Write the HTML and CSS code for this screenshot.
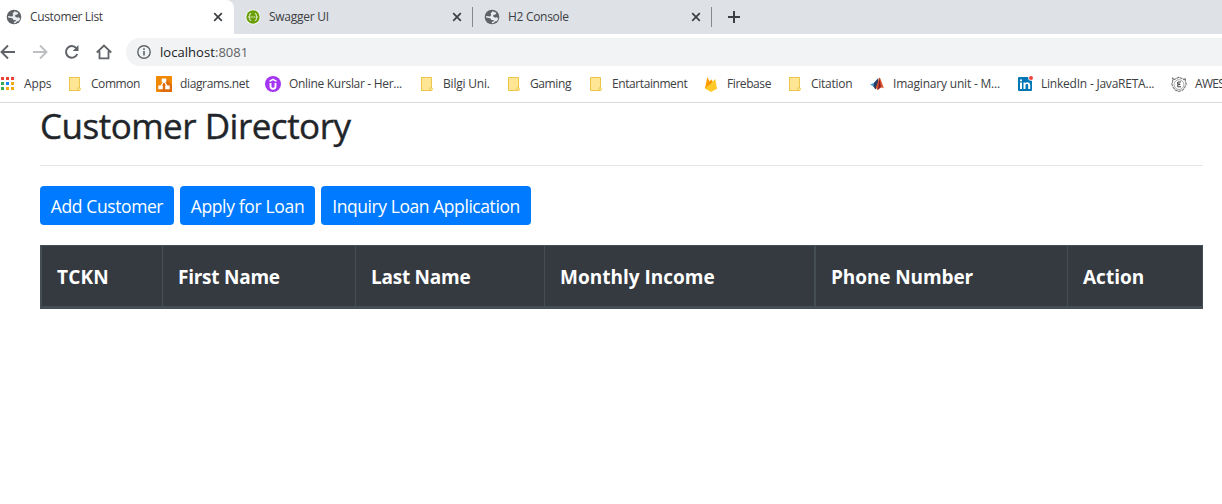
FILE: index.html
```html
<!DOCTYPE html>
<html lang="en">
<head>
<meta charset="utf-8">
<title>Customer List</title>
<link rel="stylesheet" href="styles.css">
</head>
<body>
<svg class="defs" width="0" height="0">
  <symbol id="globe" viewBox="0 0 16 16"><circle cx="8" cy="8" r="7.3" fill="#5f6368"/><path d="M8.600 2.300l3.600 1.500-.4 1.500-2.300.7-.7 1.500h3.400l2 2-1.200 2.400-2.200.6-1 1.500-2 .2.300-1.800H9.500l.3-1.300-2.300-.2-1.200-1.600L2 8.600l.2-1.500 4 .5 1-1.500-.6-1.600z" fill="#e9ebee"/><path d="M9.500 6.300h2.700l1 1.700-1.500.8-1.900-.9z" fill="#5f6368"/></symbol>
  <symbol id="close" viewBox="0 0 10 10"><path d="M1.2 1.2l7.6 7.6M8.8 1.2L1.2 8.8" stroke="#3c4043" stroke-width="1.7"/></symbol>
  <symbol id="folder" viewBox="0 0 14 16"><path d="M2.500 1.500h10v10.300c1.200.2 1.200 2.700 0 2.700h-10z" fill="#ffe694" stroke="#ebc64b"/><path d="M12.500 11.300c-2.200-.2-2.200 3 0 3.200" fill="none" stroke="#ebc64b"/></symbol>
</svg>
<header class="browser">
  <div class="tabs">
    <div class="tab tab-active"><svg class="fav"><use href="#globe"/></svg><span class="title t-list">Customer List</span><svg class="x"><use href="#close"/></svg></div>
    <div class="tab"><svg class="fav" viewBox="0 0 16 16"><circle cx="8" cy="8" r="7.500" fill="#fff"/><circle cx="8" cy="8" r="6.700" fill="#6a9f08"/><path d="M6.200 4.600c-1.700 0-1.500.6-1.500 1.800C4.700 7.500 4.400 8 3.500 8c.9 0 1.200.5 1.200 1.600 0 1.200-.2 1.800 1.500 1.800M9.800 4.600c1.700 0 1.500.6 1.500 1.800 0 1.100.3 1.600 1.200 1.600-.9 0-1.200.5-1.200 1.600 0 1.200.2 1.800-1.500 1.800" fill="none" stroke="#fff"/><path d="M5.500 8h5" stroke="#fff" stroke-width="1.200" stroke-dasharray="1.200 .6"/></svg><span class="title t-swag">Swagger UI</span><svg class="x"><use href="#close"/></svg></div>
    <div class="tab"><svg class="fav"><use href="#globe"/></svg><span class="title t-h2">H2 Console</span><svg class="x"><use href="#close"/></svg></div>
    <svg class="plus" viewBox="0 0 12 12"><path d="M6 0v12M0 6h12" stroke="#3c4043" stroke-width="2"/></svg>
  </div>
  <div class="toolbar">
    <svg class="nav" viewBox="0 0 16 16"><path d="M15 8H2M8 1.500L1.500 8 8 14.500" fill="none" stroke="#5f6368" stroke-width="1.900"/></svg>
    <svg class="nav" viewBox="0 0 16 16"><path d="M1 8h13M8 1.500L14.500 8 8 14.500" fill="none" stroke="#bdbfc2" stroke-width="1.900"/></svg>
    <svg class="nav" viewBox="0 0 16 16"><path d="M13.200 10A5.800 5.800 0 1 1 12.300 4.200" fill="none" stroke="#5f6368" stroke-width="2"/><path d="M14.500 1v6H8.700z" fill="#5f6368"/></svg>
    <svg class="nav" viewBox="0 0 16 16"><path d="M.8 8.500L8 1.500l7.200 7M3.500 7v7.300h9V7" fill="none" stroke="#5f6368" stroke-width="1.800"/></svg>
    <div class="omnibox"><svg class="info" viewBox="0 0 14 14"><circle cx="7" cy="7" r="6.200" fill="none" stroke="#5f6368" stroke-width="1.400"/><path d="M7 6v4.500M7 3.300v1.600" stroke="#5f6368" stroke-width="1.600"/></svg><span class="url">localhost<span class="port">:8081</span></span></div>
  </div>
  <nav class="bookmarks">
    <a class="bm"><svg class="ic" viewBox="0 0 16 16"><path d="M1 1h3v3H1zM6 1h3v3H6zM11 1h3v3h-3z" fill="#ea4335"/><path d="M1 6h3v3H1zM1 11h3v3H1z" fill="#34a853"/><path d="M6 6h3v3H6z" fill="#1a82f7"/><path d="M11 6h3v3h-3zM6 11h3v3H6zM11 11h3v3h-3z" fill="#f5ac14"/></svg><span class="b-apps">Apps</span></a>
    <a class="bm"><svg class="ic folder"><use href="#folder"/></svg><span class="b-common">Common</span></a>
    <a class="bm"><svg class="ic" viewBox="0 0 16 16"><rect width="16" height="16" rx="1" fill="#f08705"/><path d="M10 3l6 6v7H6l-4-3z" fill="#df6c0c"/><path d="M8 5L4.500 11M8 5l3.500 6" stroke="#fff" stroke-width="1.300"/><path d="M5.700 2.500h4.600v3.700H5.700zM2.300 9.500h4.500v3.800H2.300zM9.200 9.500h4.500v3.800H9.200z" fill="#fff"/></svg><span class="b-diag">diagrams.net</span></a>
    <a class="bm"><svg class="ic" viewBox="0 0 16 16"><circle cx="8" cy="8" r="8" fill="#a435f0"/><path d="M5.500 7v3.200c0 3.300 5 3.300 5 0V7" fill="none" stroke="#fff" stroke-width="1.900"/><path d="M4.500 5.300L8 3.300l3.500 2" fill="none" stroke="#fff" stroke-width="1.500"/></svg><span class="b-online">Online Kurslar - Her...</span></a>
    <a class="bm"><svg class="ic folder"><use href="#folder"/></svg><span class="b-bilgi">Bilgi Uni.</span></a>
    <a class="bm"><svg class="ic folder"><use href="#folder"/></svg><span class="b-gaming">Gaming</span></a>
    <a class="bm"><svg class="ic folder"><use href="#folder"/></svg><span class="b-ent">Entartainment</span></a>
    <a class="bm"><svg class="ic" viewBox="0 0 16 16"><path d="M2 12.500L4.200 1l2.500 4.500 1.500-2.300L14 12.500z" fill="#ffa000"/><path d="M2 12.500l6-7.800 1.700 3z" fill="#f57c00"/><path d="M2 12.500L12.300 3 14 12.800 8 16z" fill="#ffca28"/></svg><span class="b-fire">Firebase</span></a>
    <a class="bm"><svg class="ic folder"><use href="#folder"/></svg><span class="b-cit">Citation</span></a>
    <a class="bm"><svg class="ic" viewBox="0 0 16 16"><path d="M1 8.500l4-1.700 4-4.500L6.800 11l-2-.2z" fill="#4ba0d8"/><path d="M5 7l4.500-5-1 9-2 2.500-2-2.700z" fill="#293d63"/><path d="M10.500 1.500C12 3 13.500 9 15 12.500c-2-2-3.500-1-6.500 1.500L6.800 11C8.500 9 9.300 3.500 10.500 1.500z" fill="#d9532c"/><path d="M10.500 2l1.300 9-3.300 3c1.400-3 1-8 2-12z" fill="#82212b"/></svg><span class="b-imag">Imaginary unit - M...</span></a>
    <a class="bm"><svg class="ic" viewBox="0 0 16 16"><rect x="1" y="1" width="14" height="14" rx="1" fill="#0077b5"/><path d="M3 6.500h2V13H3zM3 3.500h2v1.700H3zM6.500 6.500h1.900v.8c1.200-1.700 4.800-1.200 4.800 1.700v4h-2V9.500c0-2-2.700-1.800-2.700 0V13h-2z" fill="#fff"/><circle cx="14" cy="2" r="2.800" fill="#fff"/><circle cx="14" cy="2" r="2" fill="#ee4440"/></svg><span class="b-link">LinkedIn - JavaRETA...</span></a>
    <a class="bm"><svg class="ic" viewBox="0 0 16 16"><path d="M3 3.500L1.500 2.200l.2 3.300L.8 8l1.500 3.500 2 2.500L8 15.400l3.700-1.400 2-2.500L15.200 8l-.9-2.500.2-3.300L13 3.500 8 1.200z" fill="none" stroke="#777" stroke-width="1.100" stroke-dasharray="3 .6"/><circle cx="8" cy="8.600" r="4.900" fill="none" stroke="#888" stroke-width=".7"/><path d="M10 6H6.700v2H9v.6H6.700v2.200H10" fill="none" stroke="#444"/></svg><span class="b-awes">AWES</span></a>
  </nav>
</header>
<main class="page">
  <h2 class="heading">Customer Directory</h2>
  <hr class="rule">
  <div class="actions">
    <button class="btn btn-add">Add Customer</button>
    <button class="btn btn-apply">Apply for Loan</button>
    <button class="btn btn-inquiry">Inquiry Loan Application</button>
  </div>
  <div class="table" role="row">
    <div class="th c-tckn">TCKN</div><div class="th c-first">First Name</div><div class="th c-last">Last Name</div><div class="th th-wide c-income">Monthly Income</div><div class="th c-phone">Phone Number</div><div class="th c-action">Action</div>
  </div>
</main>
</body>
</html>
```
FILE: styles.css
```css
* { box-sizing: border-box; }
body { margin: 0; width: 1222px; height: 504px; overflow: hidden; background: #fff; font-family: "Open Sans", "Noto Sans", sans-serif; }
svg { display: block; flex: none; }
.defs { position: absolute; }
.browser { height: 103px; border-bottom: 1px solid #d9dadc; font-size: 12px; color: #3c4043; }
.tabs { height: 34px; display: flex; background: #dee1e6; }
.tab { height: 34px; display: flex; align-items: center; width: 239px; padding-left: 11px; position: relative; }
.tab-active { width: 234px; padding-left: 6px; background: #fff; border-radius: 0 8px 0 0; }
.tab:not(.tab-active)::after { content: ""; position: absolute; right: 0; top: 7px; width: 1px; height: 20px; background: #85888c; }
.fav { width: 16px; height: 16px; margin-right: 8px; }
.title { flex: 1; white-space: nowrap; line-height: 16px; }
.t-list { letter-spacing: -.35px; }
.t-swag { letter-spacing: -.27px; }
.t-h2 { letter-spacing: -.3px; }
.x { width: 10px; height: 10px; margin-right: 11px; }
.plus { width: 12px; height: 12px; margin: 11px 0 0 16px; }
.toolbar { height: 36px; display: flex; align-items: center; gap: 16px; }
.nav { width: 16px; height: 16px; }
.omnibox { flex: 1; height: 28px; margin-left: -2px; background: #f1f3f4; border-radius: 14px 0 0 14px; display: flex; align-items: center; padding-left: 11px; gap: 9px; }
.info { width: 14px; height: 14px; }
.url { font-size: 13px; color: #202124; letter-spacing: .05px; }
.port { color: #5f6368; }
.bookmarks { height: 32px; padding-bottom: 4px; display: grid; grid-template-columns: 67px 89px 109px 154px 87px 82px 115px 84px 82px 148px 154px 51px; align-items: center; }
.bm { display: flex; align-items: center; white-space: nowrap; line-height: 16px; min-width: 0; }
.b-apps { letter-spacing: -.15px; }
.b-common { letter-spacing: -.45px; }
.b-diag { letter-spacing: -.36px; }
.b-online { letter-spacing: -.31px; }
.b-bilgi { letter-spacing: -.2px; }
.b-gaming { letter-spacing: -.4px; }
.b-ent { letter-spacing: -.42px; }
.b-fire { letter-spacing: -.42px; }
.b-cit { letter-spacing: -.25px; }
.b-imag { letter-spacing: -.2px; }
.b-link { letter-spacing: -.22px; }
.b-awes { letter-spacing: -.7px; }
.ic { width: 16px; height: 16px; margin-right: 8px; }
.folder { width: 14px; margin-right: 10px; }
.page { padding: 0 19px 0 40px; }
.heading { margin: 0; height: 62px; font-size: 35px; font-weight: 400; line-height: 46px; letter-spacing: -.5px; color: #212529; -webkit-text-stroke: .4px #212529; white-space: nowrap; }
.rule { margin: 0; border: 0; height: 1px; background: #e5e5e5; }
.actions { display: flex; gap: 6px; margin-top: 20px; }
.btn { height: 39px; border: 0; border-radius: 4px; padding: 1px 0 0; background: #007bff; color: #fff; font: 17.5px/26px "Open Sans", sans-serif; white-space: nowrap; }
.btn-add { width: 134px; letter-spacing: -.4px; }
.btn-apply { width: 135px; letter-spacing: -.34px; }
.btn-inquiry { width: 210px; letter-spacing: -.43px; }
.table { margin-top: 20px; height: 64px; display: grid; grid-template-columns: 121px 193px 189px 271px 252px 134px; background: #343a40; border: solid #454d55; border-width: 1px 1px 3px 2px; }
.th { display: flex; align-items: center; padding: 1px 0 0 15px; font-size: 19px; font-weight: 700; color: #fff; border-right: 1px solid #454d55; white-space: nowrap; }
.th-wide { border-right-width: 2px; }
.c-tckn { letter-spacing: .2px; }
.c-first, .c-last { letter-spacing: -.25px; }
.c-phone { letter-spacing: -.1px; }
.c-action { border-right: 0; }
```
